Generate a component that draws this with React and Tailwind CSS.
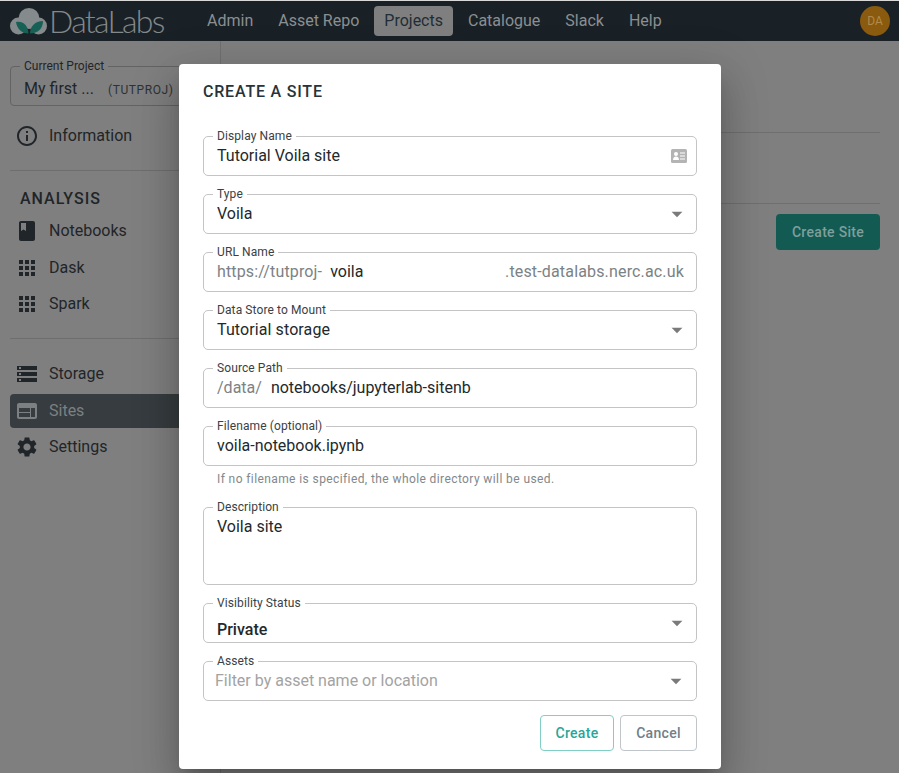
import { MdApps, MdArrowDropDown, MdBook, MdInfoOutline, MdSettings, MdStorage, MdWeb } from 'react-icons/md';

const NAV_ITEMS = ['Admin', 'Asset Repo', 'Projects', 'Catalogue', 'Slack', 'Help'];

function Logo() {
  return (
    <div className="flex w-[154px] shrink-0 items-center">
      <svg width="37" height="27" viewBox="0 0 37 27" className="mt-[1px] shrink-0">
        <circle cx="8.500" cy="18" r="8.500" fill="#858a8c" />
        <circle cx="19" cy="10.500" r="10.500" fill="#858a8c" />
        <circle cx="28.500" cy="18" r="8.500" fill="#858a8c" />
        <path d="M6 14C12.500 12.500 18 17 18.500 25.500C12 25.500 7 21 6 14Z" fill="#176056" />
        <path d="M33 13C33 20.500 28 25.500 20 25.500C20 18.500 25 13 33 13Z" fill="#176056" />
      </svg>
      <span className="ml-[2px] font-['Lato',sans-serif] text-[32px] font-light leading-none tracking-[-1.700px] text-[#83888a]">
        DataLabs
      </span>
    </div>
  );
}

function TopBar() {
  return (
    <header className="flex h-[41px] shrink-0 items-center border-t border-[#d8d8d8] bg-[#192126] pl-[10px] pr-[9px]">
      <Logo />
      <nav className="ml-[33px] flex items-center gap-[5px]">
        {NAV_ITEMS.map((item) => (
          <span
            key={item}
            className={
              item === 'Projects'
                ? 'flex h-[30px] items-center rounded-[4px] bg-[#7f7f7f] px-[10px] text-[16px] text-[#1f2d35]'
                : 'flex h-[30px] items-center px-[10px] text-[16px] text-[#8a8f92]'
            }
          >
            {item}
          </span>
        ))}
      </nav>
      <div className="ml-auto flex h-[30px] w-[30px] items-center justify-center rounded-full bg-[#8a5a0e] text-[12px] text-[#b08a4c]">
        DA
      </div>
    </header>
  );
}

function SideItem({ icon: Icon, size = 24, label, active }) {
  return (
    <div
      className={
        active
          ? 'flex h-[34px] items-center rounded-[4px] bg-[#363c3f] text-[#7c8082]'
          : 'flex h-[34px] items-center rounded-[4px] text-[#1f2528]'
      }
    >
      <span className="flex w-[39px] shrink-0 pl-[5px]">
        <Icon size={size} />
      </span>
      <span className="text-[16px]">{label}</span>
    </div>
  );
}

function Sidebar() {
  return (
    <aside className="w-[221px] shrink-0 border-r border-[#707070] pl-[10px] pr-[10px] pt-[25px]">
      <div className="relative h-[40px] rounded-[4px] border border-[#636363] pl-[13px] pt-[10px]">
        <span className="absolute left-[9px] top-[-8px] bg-[#7f7f7f] px-[4px] text-[12px] leading-[14px] text-[#1f2528]">
          Current Project
        </span>
        <span className="text-[16px] leading-[20px] text-[#1f2528]">My first ...</span>
        <span className="ml-[14px] text-[12px] tracking-[0.6px] text-[#2d3235]">(TUTPROJ)</span>
      </div>
      <div className="mt-[13px]">
        <SideItem icon={MdInfoOutline} label="Information" />
      </div>
      <div className="mt-[17px] border-t border-[#6e6e6e] pt-[18px]">
        <div className="pl-[10px] text-[16px] font-medium leading-[20px] tracking-[1px] text-[#1f2528]">ANALYSIS</div>
        <div className="mt-[4px]">
          <div className="pt-[1px]">
            <SideItem icon={MdBook} label="Notebooks" />
          </div>
          <div className="mt-[3px]">
            <SideItem icon={MdApps} label="Dask" />
          </div>
          <div className="mt-[2px]">
            <SideItem icon={MdApps} label="Spark" />
          </div>
        </div>
      </div>
      <div className="mt-[17px] border-t border-[#6e6e6e] pt-[18px]">
        <SideItem icon={MdStorage} label="Storage" />
        <div className="mt-[3px]">
          <SideItem icon={MdWeb} label="Sites" active />
        </div>
        <div className="mt-[2px]">
          <SideItem icon={MdSettings} label="Settings" />
        </div>
      </div>
    </aside>
  );
}

function MainBackground() {
  return (
    <main className="flex-1 pr-[19px]">
      <div className="mt-[91px] border-t border-[#6f6f6f]" />
      <div className="mt-[70px] border-t border-[#6f6f6f]" />
      <div className="mt-[10px] flex justify-end">
        <span className="flex h-[36px] w-[104px] items-center justify-center rounded-[4px] bg-[#125a52] text-[14px] font-medium tracking-[0.3px] text-[#7e9f9b]">
          Create Site
        </span>
      </div>
    </main>
  );
}

function Field({ label, height = 'h-[40px]', right, children, className = '' }) {
  return (
    <div className={`relative rounded-[5px] border border-[#c4c4c4] ${height} ${className}`}>
      <span className="absolute left-[9px] top-[-8px] bg-white px-[4px] text-[12px] leading-[14px] tracking-[0.1px] text-[#3a4145]">
        {label}
      </span>
      <div className="flex h-full items-start pl-[13px] pr-[12px] pt-[9px] text-[16px] leading-[20px] text-[#22292d]">
        {children}
      </div>
      {right}
    </div>
  );
}

function Arrow({ top = 'top-[6px]', right = 'right-[6px]' }) {
  return (
    <span className={`absolute ${top} ${right} text-[#7a7a7a]`}>
      <MdArrowDropDown size={26} />
    </span>
  );
}

function CardIcon() {
  return (
    <svg width="16" height="14" viewBox="0 0 16 14" className="absolute right-[9px] top-[12px]">
      <rect x="0" y="0" width="16" height="14" rx="1.500" fill="#b4b4b4" />
      <circle cx="5" cy="5" r="2" fill="#ffffff" />
      <path d="M2 11C2 8.500 3.500 7.500 5 7.500C6.500 7.500 8 8.500 8 11Z" fill="#ffffff" />
      <path d="M9 4H14M9 7H14M9 10H14" stroke="#ffffff" strokeWidth="1.200" />
    </svg>
  );
}

function CreateSiteDialog() {
  return (
    <div className="absolute inset-0 flex items-start justify-center pl-[1px] pt-[64px]">
      <div className="h-[705px] w-[542px] rounded-[4px] bg-white px-[24px] pt-[17px] font-['Roboto',sans-serif] shadow-[0_11px_15px_-7px_rgba(0,0,0,0.2),0_24px_38px_3px_rgba(0,0,0,0.14),0_9px_46px_8px_rgba(0,0,0,0.12)]">
        <h2 className="text-[16px] font-medium leading-[22px] tracking-[0.8px] text-[#27333a]">CREATE A SITE</h2>
        <div className="mt-[33px] flex flex-col gap-[18px]">
          <Field label="Display Name" right={<CardIcon />}>
            Tutorial Voila site
          </Field>
          <Field label="Type" right={<Arrow />}>
            Voila
          </Field>
          <Field label="URL Name">
            <span className="tracking-[0.15px] text-[#7b8286]">https://tutproj-</span>
            <span className="ml-[8px]">voila</span>
            <span className="ml-auto tracking-[0.16px] text-[#7b8286]">.test-datalabs.nerc.ac.uk</span>
          </Field>
          <Field label="Data Store to Mount" right={<Arrow />}>
            <span className="tracking-[0.1px]">Tutorial storage</span>
          </Field>
          <Field label="Source Path">
            <span className="text-[#7b8286]">/data/</span>
            <span className="ml-[9px]">notebooks/jupyterlab-sitenb</span>
          </Field>
          <div>
            <Field label="Filename (optional)">voila-notebook.ipynb</Field>
            <p className="ml-[14px] mt-[6px] text-[12px] leading-[14px] tracking-[0.4px] text-[#82888b]">
              If no filename is specified, the whole directory will be used.
            </p>
          </div>
          <Field label="Description" height="h-[78px]" className="mt-[3px]">
            Voila site
          </Field>
          <Field label="Visibility Status" right={<Arrow top="top-[6px]" />}>
            <span className="pt-[7px] font-medium">Private</span>
          </Field>
          <Field label="Assets" right={<Arrow top="top-[6px]" right="right-[7px]" />}>
            <span className="-ml-[2px] text-[#a3a3a3]">Filter by asset name or location</span>
          </Field>
        </div>
        <div className="mt-[14px] flex justify-end gap-[6px]">
          <span className="flex h-[36px] w-[74px] items-center justify-center rounded-[4px] border border-[#80cfc5] text-[14px] font-medium tracking-[0.3px] text-[#26a69a]">
            Create
          </span>
          <span className="flex h-[36px] w-[77px] items-center justify-center rounded-[4px] border border-[#bfc5c9] text-[14px] font-medium tracking-[0.3px] text-[#708089]">
            Cancel
          </span>
        </div>
      </div>
    </div>
  );
}

export default function App() {
  return (
    <div className="relative flex h-screen flex-col overflow-hidden bg-[#7f7f7f] font-['Roboto',sans-serif]">
      <TopBar />
      <div className="flex flex-1">
        <Sidebar />
        <MainBackground />
      </div>
      <CreateSiteDialog />
    </div>
  );
}
